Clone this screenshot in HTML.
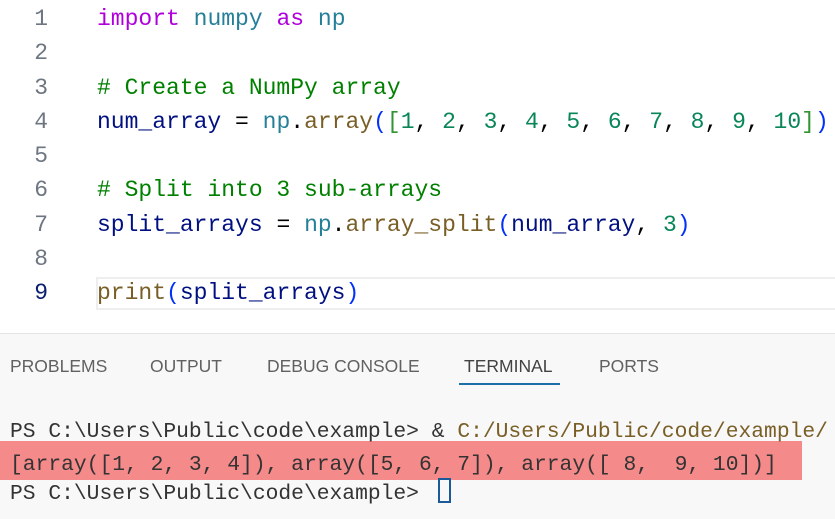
<!DOCTYPE html>
<html><head><meta charset="utf-8"><style>
*{margin:0;padding:0;box-sizing:border-box}
body{width:835px;height:519px;overflow:hidden;background:#fff;position:relative;font-family:"Liberation Mono",monospace}
.ed{position:absolute;left:0;top:2px;width:835px}
.l{height:34.3px;line-height:34.3px;font-size:23px;white-space:pre;position:relative}
.n{position:absolute;left:0;width:48px;text-align:right;color:#6e7681}
.c{position:absolute;left:97px}
.k{color:#af00db}.t{color:#267f99}.cm{color:#008000}.v{color:#001080}.f{color:#795e26}.num{color:#098658}.b1{color:#0431fa}.b2{color:#319331}
.cur{position:absolute;left:96px;top:277px;width:760px;height:33px;border:2px solid #eeeeee;border-right:none}
.panel{position:absolute;left:0;top:333px;width:835px;height:186px;background:#f8f8f8;border-top:1px solid #e5e5e5}
.tab{position:absolute;top:356px;font-family:"Liberation Sans",sans-serif;font-size:17.5px;color:#616161}
.ul{position:absolute;left:459px;top:383px;width:101px;height:2px;background:#1a6fa8}
.tl{position:absolute;left:10px;font-size:21.3px;white-space:pre;color:#333;height:34px;line-height:34px}
.hl{position:absolute;left:0;top:441px;width:802px;height:39px;background:#f58a8a}
.cursor{position:absolute;left:438px;top:478px;width:13px;height:25px;border:2px solid #1a5a99}
</style></head><body>
<div class="cur"></div>
<div class="ed">
<div class="l"><span class="n">1</span><span class="c"><span class="k">import</span> <span class="t">numpy</span> <span class="k">as</span> <span class="t">np</span></span></div>
<div class="l"><span class="n">2</span></div>
<div class="l"><span class="n">3</span><span class="c cm"># Create a NumPy array</span></div>
<div class="l"><span class="n">4</span><span class="c"><span class="v">num_array</span> = <span class="t">np</span>.<span class="f">array</span><span class="b1">(</span><span class="b2">[</span><span class="num">1</span>, <span class="num">2</span>, <span class="num">3</span>, <span class="num">4</span>, <span class="num">5</span>, <span class="num">6</span>, <span class="num">7</span>, <span class="num">8</span>, <span class="num">9</span>, <span class="num">10</span><span class="b2">]</span><span class="b1">)</span></span></div>
<div class="l"><span class="n">5</span></div>
<div class="l"><span class="n">6</span><span class="c cm"># Split into 3 sub-arrays</span></div>
<div class="l"><span class="n">7</span><span class="c"><span class="v">split_arrays</span> = <span class="t">np</span>.<span class="f">array_split</span><span class="b1">(</span><span class="v">num_array</span>, <span class="num">3</span><span class="b1">)</span></span></div>
<div class="l"><span class="n">8</span></div>
<div class="l"><span class="n" style="color:#0b216f">9</span><span class="c"><span class="f">print</span><span class="b1">(</span><span class="v">split_arrays</span><span class="b1">)</span></span></div>
</div>
<div class="panel"></div>
<div class="tab" style="left:10px">PROBLEMS</div>
<div class="tab" style="left:150px">OUTPUT</div>
<div class="tab" style="left:267px">DEBUG CONSOLE</div>
<div class="tab" style="left:464px;color:#424242">TERMINAL</div>
<div class="tab" style="left:599px">PORTS</div>
<div class="ul"></div>
<div class="hl"></div>
<div class="tl" style="top:415px">PS C:\Users\Public\code\example&gt; &amp; <span style="color:#795e26">C:/Users/Public/code/example/</span></div>
<div class="tl" style="top:448px">[array([1, 2, 3, 4]), array([5, 6, 7]), array([ 8,  9, 10])]</div>
<div class="tl" style="top:477px">PS C:\Users\Public\code\example&gt;</div>
<div class="cursor"></div>
</body></html>
